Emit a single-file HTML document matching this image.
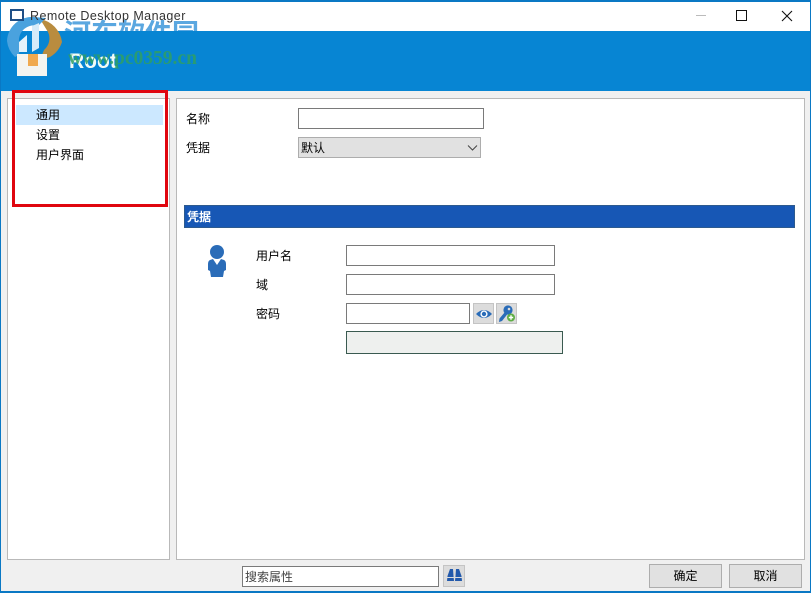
<!DOCTYPE html>
<html><head><meta charset="utf-8"><style>
html,body{margin:0;padding:0}
body{width:811px;height:593px;position:relative;overflow:hidden;background:#f0f0f0;font-family:"Liberation Sans","WenQuanYi Zen Hei","Noto Sans CJK SC",sans-serif;font-size:12px;color:#000}
div{position:absolute;box-sizing:border-box}
svg{position:absolute}
.t{white-space:nowrap;line-height:16px;height:16px}
.i{background:#fff;border:1px solid #7a7a7a}
.b{background:#e1e1e1;border:1px solid #adadad}
.c{text-align:center}
</style></head><body>
<div style="left:1px;top:1px;width:809px;height:30px;background:#fff"></div>
<div style="left:0;top:31px;width:811px;height:60px;background:#0785d3"></div>
<div style="left:0;top:0;width:811px;height:593px;border:1px solid #0a78c4;border-top-width:2px;border-bottom-width:2px"></div>

<div class="t" style="left:64px;top:17px;width:140px;height:14px;overflow:hidden;font-family:'Noto Sans CJK SC',sans-serif;font-size:27px;line-height:30px;font-weight:bold;color:#5aa7e0;letter-spacing:0">河东软件园</div>
<svg style="left:6px;top:16px" width="58" height="62" viewBox="0 0 58 62">
<path d="M34 3 A27 27 0 0 1 56 26 A27 27 0 0 1 44 41 L34 44 L38 34 A15 15 0 0 0 42 16Z" fill="#b98c3f"/>
<path d="M1 25 A25 25 0 0 1 28 1 L40 2 L32 10 A15 15 0 0 0 14 30 L13 39 L9 41 A26 26 0 0 1 1 25Z" fill="#4aa2de"/>
<path d="M13 26 L21 19 L21 36 L13 36Z" fill="#e4f2fb"/>
<path d="M26 10 L33 7 L33 32 L26 36Z" fill="#d5ebf9"/>
<rect x="11" y="38" width="30" height="22" fill="#f4f4f0"/>
<rect x="22" y="38" width="10" height="12" fill="#f0a94e"/>
</svg>
<svg style="left:10px;top:9px" width="14" height="13" viewBox="0 0 14 13"><rect x="1" y="1" width="12" height="10" fill="#fff" stroke="#1f4f86" stroke-width="2"/></svg>
<div class="t" style="left:30px;top:8px;font-size:12.5px;color:#333;letter-spacing:.45px">Remote Desktop Manager</div>

<div class="t" style="left:69px;top:51px;font-size:21px;line-height:22px;height:22px;font-weight:bold;color:#f2fbf6">Root</div>
<div class="t" style="left:68px;top:49px;font-family:'Liberation Serif',serif;font-size:19.5px;line-height:20px;height:20px;font-weight:bold;color:#2f9f63;opacity:.85">www.pc0359.cn</div>

<div style="left:7px;top:98px;width:163px;height:462px;background:#fff;border:1px solid #b9b9b9"></div>
<div style="left:176px;top:98px;width:629px;height:462px;background:#fff;border:1px solid #b9b9b9"></div>
<div style="left:16px;top:105px;width:147px;height:20px;background:#cce8ff"></div>
<div class="t" style="left:36px;top:107px">通用</div>
<div class="t" style="left:36px;top:127px">设置</div>
<div class="t" style="left:36px;top:147px">用户界面</div>
<div style="left:12px;top:90px;width:156px;height:117px;border:3px solid #e0060f"></div>

<div class="t" style="left:186px;top:111px">名称</div>
<div class="i" style="left:298px;top:108px;width:186px;height:21px"></div>
<div class="t" style="left:186px;top:140px">凭据</div>
<div class="b" style="left:298px;top:137px;width:183px;height:21px"></div>
<div class="t" style="left:301px;top:140px">默认</div>
<svg style="left:467px;top:144px" width="12" height="8" viewBox="0 0 12 8"><path d="M1 1.5 L5.5 6 L10 1.5" fill="none" stroke="#444" stroke-width="1"/></svg>

<div style="left:184px;top:205px;width:611px;height:23px;background:#1757b5;border:1px solid #2d5a8e"></div>
<div class="t" style="left:187px;top:209px;color:#fff;font-weight:bold">凭据</div>

<svg style="left:206px;top:244px" width="22" height="34" viewBox="0 0 22 34">
<circle cx="11" cy="8" r="7" fill="#2a6cb8"/>
<path d="M7 15 L11 21 L15 15 L18 16 Q20 17 20 20 L20 26 L18 27 L17 33 L5 33 L4 27 L2 26 L2 20 Q2 17 4 16Z" fill="#2a6cb8"/>
</svg>

<div class="t" style="left:256px;top:248px">用户名</div>
<div class="i" style="left:346px;top:245px;width:209px;height:21px"></div>
<div class="t" style="left:256px;top:277px">域</div>
<div class="i" style="left:346px;top:274px;width:209px;height:21px"></div>
<div class="t" style="left:256px;top:306px">密码</div>
<div class="i" style="left:346px;top:303px;width:124px;height:21px"></div>
<div class="b" style="left:473px;top:303px;width:21px;height:21px;background:#dcdcdc;border-color:#c4c4c4"></div>
<svg style="left:475px;top:307px" width="18" height="14" viewBox="0 0 18 14"><path d="M1 7 Q9 -1 17 7 Q9 15 1 7Z" fill="#2a6cb8"/><circle cx="9" cy="7" r="3.6" fill="#fff"/><circle cx="9" cy="7" r="2.2" fill="#2a6cb8"/></svg>
<div class="b" style="left:496px;top:303px;width:21px;height:21px;background:#dcdcdc;border-color:#c4c4c4"></div>
<svg style="left:497px;top:304px" width="20" height="20" viewBox="0 0 20 20"><circle cx="11" cy="6" r="4.6" fill="#2a6cb8"/><circle cx="12" cy="5" r="1.3" fill="#dcdcdc"/><path d="M8 8 L10.5 10 L5 17 L2 18 L2.5 14.5Z" fill="#2a6cb8"/><circle cx="14" cy="13.5" r="4" fill="#5fae45"/><path d="M14 11.3V15.7M11.8 13.5H16.2" stroke="#fff" stroke-width="1.4"/></svg>
<div style="left:346px;top:331px;width:217px;height:23px;background:#eef0ee;border:1px solid #3a5a50"></div>

<div class="i" style="left:242px;top:566px;width:197px;height:21px"></div>
<div class="t" style="left:245px;top:569px;color:#444">搜索属性</div>
<div class="b" style="left:443px;top:565px;width:22px;height:22px;background:#dcdcdc;border-color:#c4c4c4"></div>
<svg style="left:446px;top:568px" width="17" height="15" viewBox="0 0 17 15"><path d="M4 1 L7 1 L7.5 8 L8 13 L1 13 L1.5 8Z" fill="#2259ab"/><path d="M10 1 L13 1 L15.5 8 L16 13 L9 13 L9.5 8Z" fill="#2259ab"/><rect x="1" y="9" width="7" height="1" fill="#dcdcdc"/><rect x="9" y="9" width="7" height="1" fill="#dcdcdc"/></svg>
<div class="b c t" style="left:649px;top:564px;width:73px;height:24px;line-height:23px">确定</div>
<div class="b c t" style="left:729px;top:564px;width:73px;height:24px;line-height:23px">取消</div>

<div style="left:696px;top:15px;width:10px;height:1px;background:#bbb"></div>
<div style="left:736px;top:10px;width:11px;height:11px;border:1px solid #111"></div>
<svg style="left:781px;top:10px" width="12" height="12" viewBox="0 0 12 12"><path d="M1 1L11 11M11 1L1 11" stroke="#111" stroke-width="1.1"/></svg>
</body></html>
